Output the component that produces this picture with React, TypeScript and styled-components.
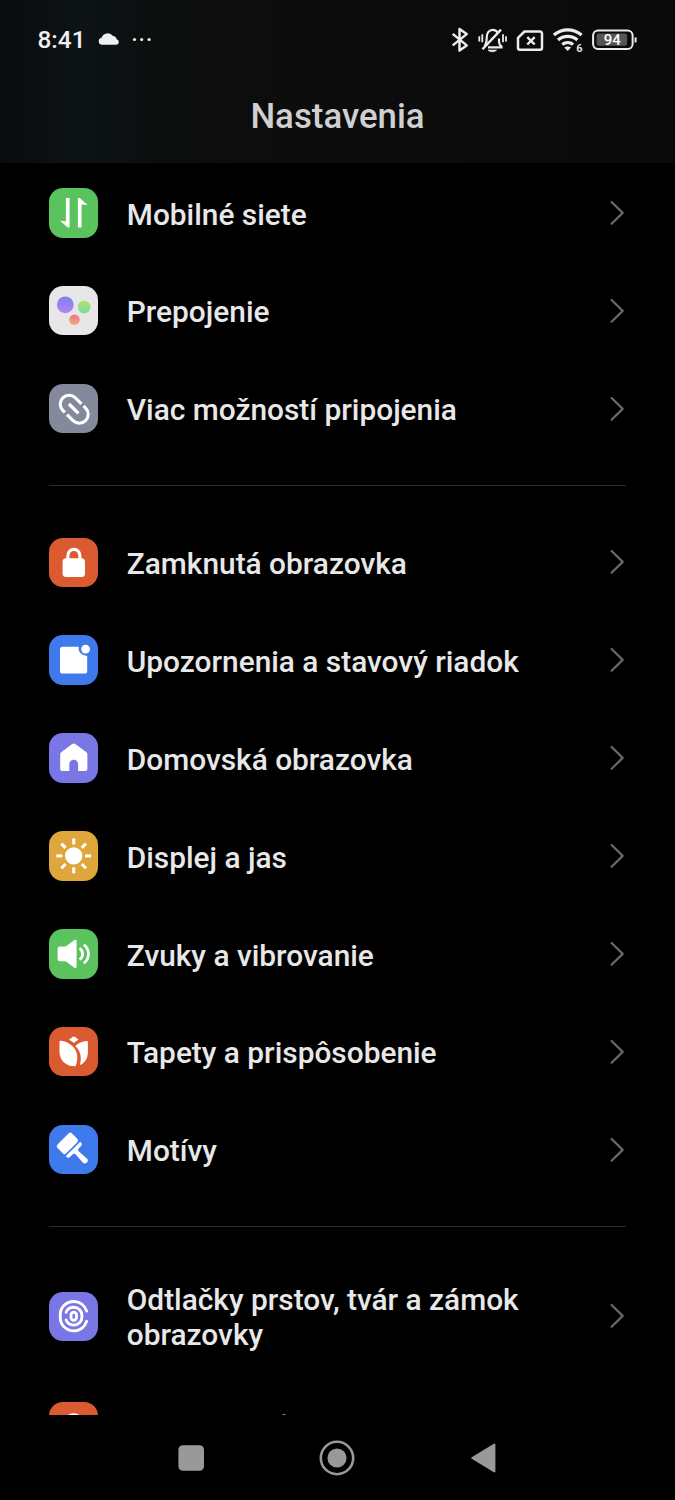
import React from 'react';
import styled, { createGlobalStyle } from 'styled-components';

const GlobalStyle = createGlobalStyle`
  body { margin: 0; background: #000; }
  * { box-sizing: border-box; }
`;

const Screen = styled.div`
  display: flex;
  flex-direction: column;
  width: 675px;
  height: 1500px;
  overflow: hidden;
  background: #000;
  color: #e8e8e8;
  font-family: Roboto, 'Liberation Sans', sans-serif;
  font-weight: 500;
`;

const Header = styled.header`
  flex: none;
  height: 163px;
  background: linear-gradient(90deg, #090c0c 0, #0b0f10 45px, #0d1317 75px, #0c1113 105px, #0c0f0f 150px, #0d0d0d 210px, #0c0c0c 400px, #0a0a0a 675px);
`;

const StatusBar = styled.div`
  display: flex;
  justify-content: space-between;
  height: 79px;
  padding: 0 37px 0 37.5px;
  align-items: center;
  color: #f0f0f0;
`;

const StatusGroup = styled.div<{ $gap: number }>`
  display: flex;
  align-items: center;
  gap: ${(p) => p.$gap}px;
  svg { display: block; overflow: visible; }
`;

const Clock = styled.span`
  font-size: 24.4px;
  line-height: 28px;
  padding-top: 1px;
`;

const Title = styled.h1`
  margin: 0;
  padding-top: 16px;
  text-align: center;
  font-size: 34.8px;
  line-height: 42px;
  font-weight: 500;
  color: #d0d0d0;
`;

const List = styled.main`
  flex: none;
  height: 1252.3px;
  padding-top: 0.9px;
  overflow: hidden;
`;

const Section = styled.section`
  padding: 0 49px;
`;

const Row = styled.div<{ $tall?: boolean }>`
  display: flex;
  align-items: center;
  height: ${(p) => (p.$tall ? 123.7 : 97.9)}px;
`;

const Tile = styled.div<{ $color: string }>`
  flex: none;
  width: 49.4px;
  height: 49.4px;
  border-radius: 14px;
  background: ${(p) => p.$color};
  svg { display: block; width: 100%; height: 100%; }
`;

const Label = styled.div`
  flex: 1;
  padding: 2.4px 50px 0 28.4px;
  font-size: 29.85px;
  line-height: 35px;
`;

const Chevron = styled.svg`
  flex: none;
  width: 18px;
  height: 28px;
  display: block;
`;

const Divider = styled.hr`
  height: 1.4px;
  margin: 27px 49px 27.4px;
  border: 0;
  background: #2b2b2b;
`;

const NavBar = styled.nav`
  flex: 1;
  display: flex;
  justify-content: center;
  align-items: center;
  padding-right: 1px;
  svg { display: block; }
`;

const NavButton = styled.div`
  display: flex;
  justify-content: center;
  width: 146px;
`;

const orange = '#db5b30';
const blue = '#3f7aed';
const violet = '#7976e6';
const green = '#5bc35e';

const icons: Record<string, React.ReactNode> = {
  mobile: (
    <g fill="#fff">
      <path d="M16.900 10h3.700v29.400H18.800l-7.900-7 6 1z" />
      <path d="M32.600 39.400h-3.700V10h1.800l7.900 7-6-.6z" />
    </g>
  ),
  connect: (
    <>
      <defs>
        <linearGradient id="c1" x1="0" y1="0" x2="0" y2="1"><stop offset="0" stopColor="#7b83ee" /><stop offset="1" stopColor="#b584ef" /></linearGradient>
        <linearGradient id="c2" x1="0" y1="0" x2="0" y2="1"><stop offset="0" stopColor="#b5df68" /><stop offset="1" stopColor="#79dda2" /></linearGradient>
        <linearGradient id="c3" x1="0" y1="0" x2="0" y2="1"><stop offset="0" stopColor="#ee7088" /><stop offset="1" stopColor="#f3ac7b" /></linearGradient>
      </defs>
      <circle cx="16.300" cy="18.800" r="8.400" fill="url(#c1)" />
      <circle cx="35.200" cy="21" r="6.300" fill="url(#c2)" />
      <circle cx="25.500" cy="33.700" r="5.300" fill="url(#c3)" />
    </>
  ),
  link: (
    <g transform="rotate(45 24.7 24.7)" fill="none" stroke="#fff" strokeWidth="3.100">
      <path d="M26.800 15.800H18.200a8.900 8.900 0 0 0 0 17.800H21.200" />
      <path d="M22.600 33.600H31.200a8.900 8.900 0 0 0 0-17.800H28.200" transform="translate(1.500 0)" />
      <path d="M18 24.700H31.400" strokeWidth="3.300" />
    </g>
  ),
  lock: (
    <>
      <rect x="13.600" y="20.300" width="22.400" height="18.800" rx="3.500" fill="#fff" />
      <path d="M18.900 22v-4.600a6 6 0 0 1 12 0V22" fill="none" stroke="#fff" strokeWidth="3.100" />
    </>
  ),
  notify: (
    <>
      <path d="M13.700 11.700h16a7.800 7.800 0 0 0 8.500 9v15.200a2.700 2.700 0 0 1-2.700 2.700H13.700a2.700 2.700 0 0 1-2.700-2.700V14.400a2.700 2.700 0 0 1 2.700-2.700z" fill="#fff" />
      <circle cx="36.600" cy="14.100" r="4.400" fill="#fff" />
    </>
  ),
  home: (
    <path d="M22.900 11.300a3 3 0 0 1 3.800 0l10.400 7.600a3 3 0 0 1 1.300 2.500v14.700a2 2 0 0 1-2 2h-7.300v-7a4.400 4.400 0 0 0-8.800 0v7h-7.100a2 2 0 0 1-2-2V21.400a3 3 0 0 1 1.300-2.500z" fill="#fff" />
  ),
  sun: (
    <>
      <circle cx="24.700" cy="24.900" r="8.700" fill="#fff" />
      <g stroke="#fff" strokeWidth="3">
        {[0, 45, 90, 135, 180, 225, 270, 315].map((a) => (
          <path key={a} d="M24.700 7.500v6" transform={`rotate(${a} 24.7 24.9)`} />
        ))}
      </g>
    </>
  ),
  sound: (
    <>
      <path d="M10.800 17.600h5.900l8.700-6.500c1-.7 2.200-.2 2.200 1v25.600c0 1.200-1.200 1.700-2.200 1l-8.700-6.500h-5.900a2.200 2.200 0 0 1-2.200-2.200V19.800a2.200 2.200 0 0 1 2.200-2.200z" fill="#fff" />
      <g fill="none" stroke="#fff" strokeWidth="2.700">
        <path d="M30.600 19.200c4 3 4 8.400 0 11.400" />
        <path d="M34.800 15.600c6.200 5 6.200 13.600 0 18.600" />
      </g>
    </>
  ),
  tulip: (
    <g fill="#fff">
      <path d="M11.800 13.800C20 14.600 28.800 21 28.300 31c-.2 3-.8 5.500-1.600 8.200C17 39.600 10.500 33.500 10.500 24.500v-9.600c0-.7.500-1.200 1.300-1.100z" />
      <path d="M37.900 14c.6 0 1 .4 1 1.100v9.800c0 6.300-2.800 10.800-8 13.100 2-7.400.8-13.900-4.600-19 3-2.800 6.800-4.600 11.600-5z" />
      <path d="M23.400 10.100q1.400-1 2.800 0l3.400 2.700q-2 .8-4.600 3.200-2.200-1.800-5-3.200z" />
    </g>
  ),
  brush: (
    <g transform="rotate(-45 24.7 24.7)" fill="#fff">
      <rect x="14.400" y="9.600" width="20.600" height="12.400" rx="2.500" />
      <path d="M14.400 23.600h20.600v.9a2.800 2.800 0 0 1-2.800 2.800h-3.200q-2 .1-1.900 2l.7 10.900a2.900 2.900 0 0 1-5.800 0l.7-10.900q.1-1.900-1.900-2h-3.600a2.800 2.800 0 0 1-2.800-2.800z" />
    </g>
  ),
  finger: (
    <g fill="none" stroke="#fff" strokeWidth="2.900" strokeLinecap="round" transform="translate(0 -0.500)">
      <path d="M37.700 19.600C35.700 13.700 30.700 10 24.900 10 17.300 10 11.300 15.800 11.300 23v3.300c0 7.300 6 13.100 13.600 13.100 5.800 0 10.800-3.700 12.800-9.600" />
      <path d="M17.100 20.800c1.200-3.100 4.200-5 7.600-5 4.600 0 8.200 3.500 8.200 7.900v2c0 4.400-3.600 7.900-8.200 7.900-3.400 0-6.400-1.900-7.600-5" />
      <rect x="22" y="20.700" width="5.500" height="8" rx="2.750" />
    </g>
  ),
  safety: <circle cx="24.700" cy="22.600" r="11.300" fill="#fff" />,
};

type Item = { icon: string; color: string; label: string; tall?: boolean };

const sections: Item[][] = [
  [
    { icon: 'mobile', color: green, label: 'Mobilné siete' },
    { icon: 'connect', color: '#e7e7e7', label: 'Prepojenie' },
    { icon: 'link', color: '#84899b', label: 'Viac možností pripojenia' },
  ],
  [
    { icon: 'lock', color: orange, label: 'Zamknutá obrazovka' },
    { icon: 'notify', color: blue, label: 'Upozornenia a stavový riadok' },
    { icon: 'home', color: violet, label: 'Domovská obrazovka' },
    { icon: 'sun', color: '#dfa63b', label: 'Displej a jas' },
    { icon: 'sound', color: green, label: 'Zvuky a vibrovanie' },
    { icon: 'tulip', color: orange, label: 'Tapety a prispôsobenie' },
    { icon: 'brush', color: blue, label: 'Motívy' },
  ],
  [
    { icon: 'finger', color: violet, label: 'Odtlačky prstov, tvár a zámok obrazovky', tall: true },
    { icon: 'safety', color: orange, label: 'Bezpečnosť' },
  ],
];

function StatusIcons() {
  return (
    <svg width="188" height="30" viewBox="450 24.6 188 30" fill="none" stroke="#ececec">
      <path d="M452.700 33.500l14 11.500-7.200 5.200V28.500l7.200 5.200-14 11.300" strokeWidth="2.500" strokeLinejoin="round" />
      <g strokeWidth="2.200">
        <path d="M484.500 45.600c2-2.200 2.200-4.300 2.200-8.200 0-5 2.500-8 6-8 2.500 0 4.300 1.300 5.300 3.300" />
        <path d="M499 38v3.300c0 2 .8 3.300 2.500 4.900v.8h-13.500" />
        <path d="M482.500 48.800l18.500-19.600" strokeWidth="2.400" />
        <path d="M479.300 35.800v5.400M482.300 33.800v8M503 33.800v8M506 35.800v5.400" strokeWidth="1.800" />
        <path d="M488 49.700h8.600c-1.500 2.200-7.100 2.200-8.600 0z" fill="#ececec" strokeWidth=".6" />
      </g>
      <path d="M524.500 31.100h15.500a2 2 0 0 1 2 2v14.300a2 2 0 0 1-2 2h-20a2 2 0 0 1-2-2V37.400z" strokeWidth="2.500" strokeLinejoin="round" />
      <path d="M527.300 36.700l7.400 7.400M534.700 36.700l-7.400 7.400" strokeWidth="2.400" />
      <g strokeWidth="3.300">
        <path d="M553.800 34.700c8-7 19.800-7 27.800 0" />
        <path d="M558 39.700c5.600-4.900 13.800-4.900 19.400 0" />
        <path d="M562.300 44.200c3.200-2.700 7.600-2.700 10.800 0" />
      </g>
      <path d="M564.300 47.200c2-1.500 4.800-1.500 6.800 0l-3.400 3.500z" fill="#ececec" stroke="none" />
      <text x="576.200" y="51.200" fontSize="11" fontWeight="600" fill="#ececec" stroke="none">6</text>
      <rect x="593.100" y="30.100" width="39.500" height="18.400" rx="5" strokeWidth="2" />
      <rect x="596.600" y="33.200" width="30.500" height="12.200" rx="2" fill="#555" stroke="none" />
      <path d="M635.600 37v5" strokeWidth="2" />
      <text x="612.200" y="44.700" fontSize="15" fontWeight="500" textAnchor="middle" fill="#fff" stroke="none">94</text>
    </svg>
  );
}

export default function App() {
  return (
    <Screen>
      <GlobalStyle />
      <Header>
        <StatusBar>
          <StatusGroup $gap={13}>
            <Clock>8:41</Clock>
            <svg width="54" height="14" viewBox="0.800 0.500 54 14" fill="#f0f0f0">
              <path d="M4 12.300a3.600 3.600 0 0 1-.7-7.100A6.600 6.600 0 0 1 14.800 3.500a4.300 4.300 0 0 1 3.700 3.300 2.800 2.800 0 0 1-.4 5.500z" />
              <circle cx="36.300" cy="7" r="1.600" />
              <circle cx="43.500" cy="7" r="1.600" />
              <circle cx="50.900" cy="7" r="1.600" />
            </svg>
          </StatusGroup>
          <StatusGroup $gap={0}>
            <StatusIcons />
          </StatusGroup>
        </StatusBar>
        <Title>Nastavenia</Title>
      </Header>
      <List>
        {sections.map((items, i) => (
          <React.Fragment key={i}>
            {i > 0 && <Divider />}
            <Section>
              {items.map((it) => (
                <Row key={it.icon} $tall={it.tall}>
                  <Tile $color={it.color}>
                    <svg viewBox="0 0 49.4 49.4">{icons[it.icon]}</svg>
                  </Tile>
                  <Label>{it.label}</Label>
                  <Chevron viewBox="0 0 18 28" fill="none" stroke="#696969" strokeWidth="2.200" strokeLinecap="round" strokeLinejoin="round">
                    <path d="M3.600 3L14.700 13.900 3.600 24.800" />
                  </Chevron>
                </Row>
              ))}
            </Section>
          </React.Fragment>
        ))}
      </List>
      <NavBar>
        <NavButton>
          <svg width="26" height="26"><rect x="0.400" y="0.200" width="25.600" height="25.600" rx="4.500" fill="#999" /></svg>
        </NavButton>
        <NavButton>
          <svg width="36" height="36"><circle cx="18" cy="18" r="16.200" fill="none" stroke="#999" strokeWidth="2.600" /><circle cx="18" cy="18" r="9.600" fill="#999" /></svg>
        </NavButton>
        <NavButton>
          <svg width="26" height="30"><path d="M24.400 1.500v27L2.200 15z" fill="#999" stroke="#999" strokeWidth="2" strokeLinejoin="round" /></svg>
        </NavButton>
      </NavBar>
    </Screen>
  );
}
